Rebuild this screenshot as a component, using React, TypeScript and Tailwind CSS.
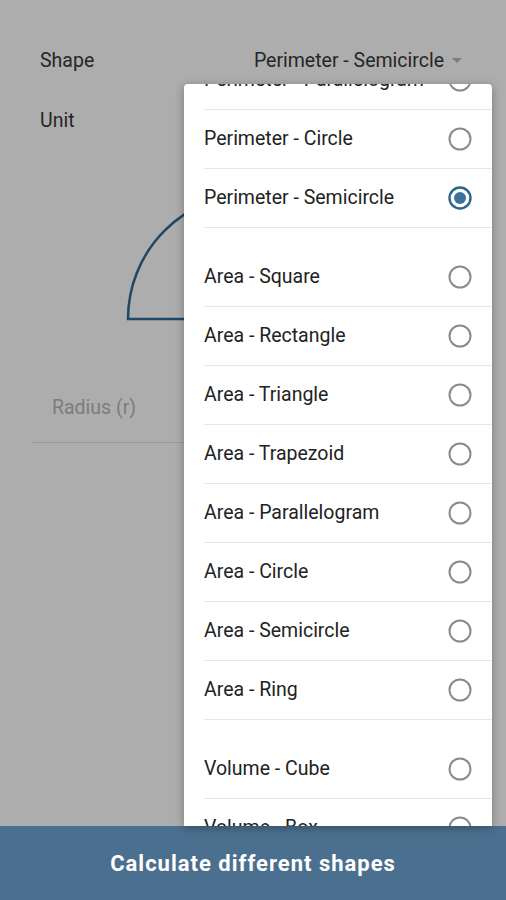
import React from 'react';

type Item = { label: string; selected?: boolean; gapBefore?: boolean };

const items: Item[] = [
  { label: 'Perimeter - Parallelogram' },
  { label: 'Perimeter - Circle' },
  { label: 'Perimeter - Semicircle', selected: true },
  { label: 'Area - Square', gapBefore: true },
  { label: 'Area - Rectangle' },
  { label: 'Area - Triangle' },
  { label: 'Area - Trapezoid' },
  { label: 'Area - Parallelogram' },
  { label: 'Area - Circle' },
  { label: 'Area - Semicircle' },
  { label: 'Area - Ring' },
  { label: 'Volume - Cube', gapBefore: true },
  { label: 'Volume - Box' },
];

function Radio({ selected }: { selected?: boolean }) {
  return (
    <svg width="26" height="26" viewBox="0 0 26 26">
      {selected ? (
        <>
          <circle cx="13" cy="13" r="10.5" fill="none" stroke="#2c668f" strokeWidth="2.4" />
          <circle cx="13" cy="13" r="6" fill="#3f7199" />
        </>
      ) : (
        <circle cx="13" cy="13" r="10.5" fill="none" stroke="#8a8a8a" strokeWidth="2" />
      )}
    </svg>
  );
}

function ShapeMenu() {
  return (
    <div className="absolute left-[184px] top-[84px] bottom-0 w-[308px] overflow-hidden rounded-t-[4px] bg-white shadow-[0_2px_10px_rgba(0,0,0,0.3)]">
      <div className="-mt-[33px]">
        {items.map((it) => (
          <div key={it.label}>
            {it.gapBefore && <div className="h-[20px]" />}
            <div className="ml-[20px] flex h-[59px] items-center justify-between border-b border-[#e6e6e6] pr-[19px]">
              <span className="text-[19.5px] text-[#222222]">{it.label}</span>
              <Radio selected={it.selected} />
            </div>
          </div>
        ))}
      </div>
    </div>
  );
}

export default function App() {
  return (
    <div
      className="flex h-[900px] w-[506px] flex-col bg-[#adadad]"
      style={{ fontFamily: 'Roboto, "Noto Sans", sans-serif' }}
    >
      <div className="relative flex-1">
        {/* Form behind the dialog */}
        <div className="flex items-center justify-between pl-[40px] pr-[44px] pt-[46px]">
          <span className="text-[19.5px] text-[#262626]">Shape</span>
          <div className="flex items-center gap-[8px]">
            <span className="text-[19.5px] text-[#262626]">Perimeter - Semicircle</span>
            <svg width="10" height="6" viewBox="0 0 10 6">
              <path d="M0 0 L10 0 L5 5 Z" fill="#7c7c7c" />
            </svg>
          </div>
        </div>
        <div className="pl-[40px] pt-[31px]">
          <span className="text-[19.5px] text-[#262626]">Unit</span>
        </div>

        <div className="mt-[56px] flex justify-center">
          <svg width="256" height="130" viewBox="0 0 256 130">
            <path
              d="M3 127 A125 125 0 0 1 253 127 Z"
              fill="none"
              stroke="#1f4866"
              strokeWidth="2.5"
            />
          </svg>
        </div>

        <div className="mx-[32px] mt-[71px] border-b border-[#999999] pb-[20px] pl-[20px]">
          <span className="text-[19.5px] text-[#7c7c7c]">Radius (r)</span>
        </div>

        <ShapeMenu />
      </div>

      <div className="flex h-[74px] items-center justify-center bg-[#4b6f8f]">
        <span className="text-[22px] font-bold tracking-[1px] text-white">
          Calculate different shapes
        </span>
      </div>
    </div>
  );
}
